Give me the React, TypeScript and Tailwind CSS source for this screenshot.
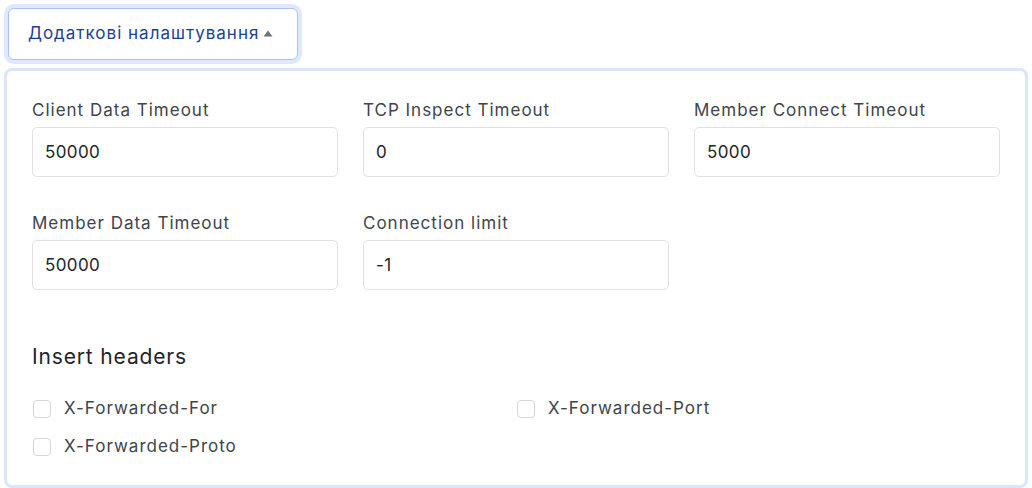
const fields = [
  { label: "Client Data Timeout", value: "50000" },
  { label: "TCP Inspect Timeout", value: "0" },
  { label: "Member Connect Timeout", value: "5000" },
  { label: "Member Data Timeout", value: "50000" },
  { label: "Connection limit", value: "-1" }
];

const headers = ["X-Forwarded-For", "X-Forwarded-Port", "X-Forwarded-Proto"];

export default function App() {
  return (
    <div className="min-h-[488px] w-[1032px] bg-white px-[4px] pt-[8px] font-['Inter','Liberation_Sans',sans-serif]">
      <button
        type="button"
        className="ml-[4px] flex h-[52px] w-[290px] items-center gap-[4px] rounded-[6px] border border-[#a9c2f3] bg-white pl-[19px] text-[17px] tracking-[1px] text-[#1d4192] shadow-[0_0_0_4px_#dfe8fd]"
      >
        <span>Додаткові налаштування</span>
        <svg width="10" height="7" viewBox="0 0 10 7" className="mb-[2px]">
          <path d="M5 0.5 L9.5 6.5 L0.5 6.5 Z" fill="#6c757d" />
        </svg>
      </button>

      <div className="mt-[8px] w-[1024px] rounded-[8px] border-[3px] border-[#dbe6fc] px-[25px] pb-[25px] pt-[27px]">
        <div className="grid grid-cols-3 gap-x-[25px] gap-y-[34px]">
          {fields.map((field) => (
            <Field key={field.label} label={field.label} value={field.value} />
          ))}
        </div>

        <h3 className="mt-[52px] text-[21px] leading-[30px] tracking-[0.85px] text-[#212529]">Insert headers</h3>

        <div className="mt-[24px] grid grid-cols-2 gap-y-[12px]">
          {headers.map((name) => (
            <label key={name} className="flex h-[26px] items-center gap-[13px] text-[17px] tracking-[1px] text-[#40444d]">
              <span className="ml-[1px] h-[18px] w-[18px] rounded-[4px] border border-[#d3d6da] bg-white" />
              <span>{name}</span>
            </label>
          ))}
        </div>
      </div>
    </div>
  );
}

function Field({ label, value }: Readonly<{ label: string; value: string }>) {
  return (
    <div className="flex flex-col">
      <span className="text-[17px] leading-[25px] tracking-[1px] text-[#40444d]">{label}</span>
      <div className="mt-[4px] flex h-[50px] items-center rounded-[5px] border border-[#dee2e6] px-[12px] pt-[1px] text-[17px] tracking-[0.4px] text-[#212529]">
        {value}
      </div>
    </div>
  );
}
